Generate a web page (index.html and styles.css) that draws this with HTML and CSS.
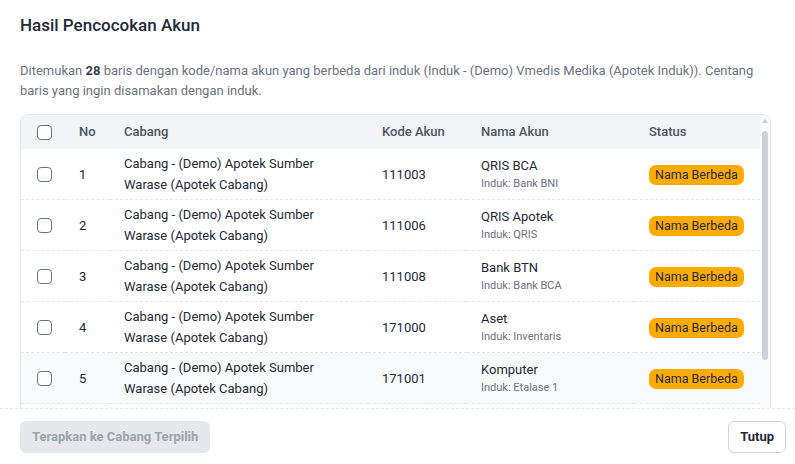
FILE: index.html
```html
<!DOCTYPE html>
<html lang="id">
<head>
<meta charset="utf-8">
<title>Hasil Pencocokan Akun</title>
<link rel="stylesheet" href="styles.css">
</head>
<body>
<div class="modal">
  <div class="modal-body">
    <h2 class="title">Hasil Pencocokan Akun</h2>
    <p class="desc">Ditemukan <b>28</b> baris dengan kode/nama akun yang berbeda dari induk (Induk - (Demo) Vmedis Medika (Apotek Induk)). Centang baris yang ingin disamakan dengan induk.</p>

    <div class="table-wrap">
      <div class="table-scroll">
        <table class="grid">
          <colgroup>
            <col class="c-check"><col class="c-no"><col class="c-branch"><col class="c-code"><col class="c-name"><col class="c-status">
          </colgroup>
          <thead>
            <tr>
              <th><span class="check"></span></th>
              <th>No</th>
              <th>Cabang</th>
              <th>Kode Akun</th>
              <th>Nama Akun</th>
              <th>Status</th>
            </tr>
          </thead>
          <tbody>
            <tr>
              <td><span class="check"></span></td>
              <td>1</td>
              <td>Cabang - (Demo) Apotek Sumber Warase (Apotek Cabang)</td>
              <td>111003</td>
              <td><div class="acc">QRIS BCA</div><div class="parent">Induk: Bank BNI</div></td>
              <td><span class="badge">Nama Berbeda</span></td>
            </tr>
            <tr>
              <td><span class="check"></span></td>
              <td>2</td>
              <td>Cabang - (Demo) Apotek Sumber Warase (Apotek Cabang)</td>
              <td>111006</td>
              <td><div class="acc">QRIS Apotek</div><div class="parent">Induk: QRIS</div></td>
              <td><span class="badge">Nama Berbeda</span></td>
            </tr>
            <tr>
              <td><span class="check"></span></td>
              <td>3</td>
              <td>Cabang - (Demo) Apotek Sumber Warase (Apotek Cabang)</td>
              <td>111008</td>
              <td><div class="acc">Bank BTN</div><div class="parent">Induk: Bank BCA</div></td>
              <td><span class="badge">Nama Berbeda</span></td>
            </tr>
            <tr>
              <td><span class="check"></span></td>
              <td>4</td>
              <td>Cabang - (Demo) Apotek Sumber Warase (Apotek Cabang)</td>
              <td>171000</td>
              <td><div class="acc">Aset</div><div class="parent">Induk: Inventaris</div></td>
              <td><span class="badge">Nama Berbeda</span></td>
            </tr>
            <tr class="is-hover">
              <td><span class="check"></span></td>
              <td>5</td>
              <td>Cabang - (Demo) Apotek Sumber Warase (Apotek Cabang)</td>
              <td>171001</td>
              <td><div class="acc">Komputer</div><div class="parent">Induk: Etalase 1</div></td>
              <td><span class="badge">Nama Berbeda</span></td>
            </tr>
            <tr>
              <td><span class="check"></span></td>
              <td>6</td>
              <td>Cabang - (Demo) Apotek Sumber Warase (Apotek Cabang)</td>
              <td>171002</td>
              <td><div class="acc">Peralatan</div><div class="parent">Induk: Peralatan Kantor</div></td>
              <td><span class="badge">Nama Berbeda</span></td>
            </tr>
          </tbody>
        </table>
      </div>
      <div class="scrollbar">
        <span class="sb-arrow"></span>
        <span class="sb-thumb"></span>
      </div>
    </div>
  </div>

  <div class="modal-footer">
    <button class="btn btn-primary" disabled>Terapkan ke Cabang Terpilih</button>
    <button class="btn btn-outline">Tutup</button>
  </div>
</div>
</body>
</html>
```

FILE: styles.css
```css
* { box-sizing: border-box; }

html, body {
  margin: 0;
  padding: 0;
  background: #fff;
}

body {
  font-family: Roboto, "Noto Sans", "Liberation Sans", sans-serif;
  color: #1f2937;
  width: 795px;
  height: 464px;
  overflow: hidden;
}

.modal {
  display: flex;
  flex-direction: column;
  height: 464px;
}

.modal-body {
  height: 408px;
  overflow: hidden;
  padding: 13px 24px 0 20px;
}

.title {
  margin: 0;
  font-size: 17px;
  line-height: 24px;
  font-weight: 500;
  color: #1f2937;
}

.desc {
  margin: 24px 0 13px;
  font-size: 13px;
  line-height: 20px;
  color: #6b7280;
}

.desc b {
  color: #374151;
  font-weight: 700;
}

/* table frame: scroll area + scrollbar column */
.table-wrap {
  display: flex;
  height: 600px;
  border: 1px solid #e5e7eb;
  border-radius: 8px;
  overflow: hidden;
}

.table-scroll {
  flex: 1;
  min-width: 0;
}

.grid {
  width: 100%;
  border-collapse: collapse;
  table-layout: fixed;
  font-size: 13px;
}

.c-check  { width: 44px; }
.c-no     { width: 45px; }
.c-branch { width: 258px; }
.c-code   { width: 99px; }
.c-name   { width: 168px; }
.c-status { width: auto; }

.grid th {
  background: #f3f4f6;
  color: #4b5563;
  font-weight: 500;
  text-align: left;
  padding: 7px 14px;
  line-height: 20px;
  height: 34px;
}

.grid td {
  padding: 4px 14px;
  line-height: 21px;
  color: #1f2937;
  vertical-align: middle;
  border-bottom: 1px dashed #e5e7eb;
}

.grid th:first-child,
.grid td:first-child {
  padding-left: 16px;
  padding-right: 0;
}

.grid tr.is-hover td { background: #f9fafb; }

.check {
  display: block;
  width: 15px;
  height: 15px;
  border: 1.5px solid #6b7280;
  border-radius: 4px;
  background: #fff;
}

.acc {
  line-height: 19px;
}

.parent {
  font-size: 11px;
  line-height: 18px;
  color: #6b7280;
}

.badge {
  display: inline-block;
  vertical-align: middle;
  white-space: nowrap;
  background: #ffab00;
  color: #1f2937;
  font-size: 12.5px;
  font-weight: 400;
  line-height: 20px;
  padding: 0 6px;
  border-radius: 7px;
}

/* slim scrollbar column drawn beside the table */
.scrollbar {
  width: 10px;
  flex: none;
  background: #fbfbfb;
  display: flex;
  flex-direction: column;
  align-items: center;
  padding-top: 4px;
}

.sb-arrow {
  width: 0;
  height: 0;
  border-left: 3px solid transparent;
  border-right: 3px solid transparent;
  border-bottom: 4px solid #c4c7cc;
}

.sb-thumb {
  margin-top: 8px;
  width: 6px;
  height: 229px;
  border-radius: 3px;
  background: #cdd1d7;
}

.modal-footer {
  flex: 1;
  display: flex;
  justify-content: space-between;
  align-items: center;
  padding: 0 9px 0 20px;
  border-top: 1px dashed #e5e7eb;
}

.btn {
  font-family: inherit;
  font-size: 13px;
  font-weight: 700;
  line-height: 30px;
  height: 32px;
  padding: 0 11px;
  border-radius: 6px;
  cursor: pointer;
}

.btn-primary {
  background: #e5e7eb;
  color: #9ca3af;
  border: 1px solid #e5e7eb;
  cursor: not-allowed;
}

.btn-outline {
  background: #fff;
  color: #1f2937;
  border: 1px solid #d1d5db;
}
```
